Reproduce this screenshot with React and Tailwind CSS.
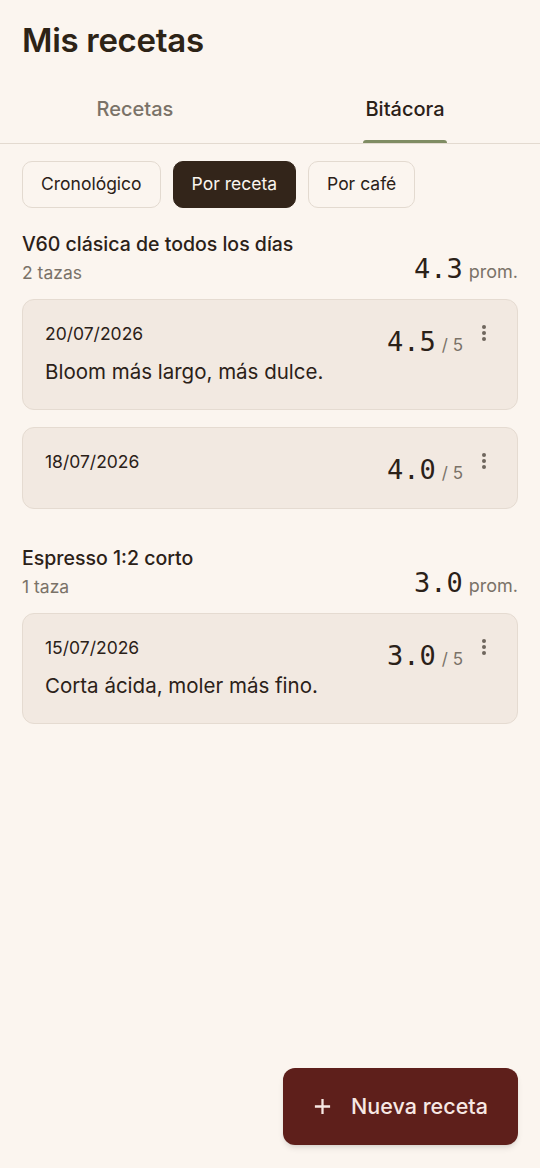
import { useState } from 'react';

const entriesByRecipe = [
  {
    name: 'V60 clásica de todos los días',
    count: '2 tazas',
    avg: '4.3',
    entries: [
      { date: '20/07/2026', score: '4.5', note: 'Bloom más largo, más dulce.' },
      { date: '18/07/2026', score: '4.0', note: null },
    ],
  },
  {
    name: 'Espresso 1:2 corto',
    count: '1 taza',
    avg: '3.0',
    entries: [{ date: '15/07/2026', score: '3.0', note: 'Corta ácida, moler más fino.' }],
  },
];

const KebabIcon = () => (
  <svg width="6" height="18" viewBox="0 0 6 18" className="text-[#6f665d]">
    <circle cx="3" cy="3" r="2" fill="currentColor" />
    <circle cx="3" cy="9" r="2" fill="currentColor" />
    <circle cx="3" cy="15" r="2" fill="currentColor" />
  </svg>
);

const EntryCard = ({ entry }) => (
  <div className="rounded-xl border border-[#e5dbd1] bg-[#f2e9e1] pl-[22px] pr-[30px] pt-[18px] pb-[22px]">
    <div className="flex items-start justify-between">
      <div className="mt-[4px] text-[17.5px] leading-6 text-[#2b2118]">{entry.date}</div>
      <div className="flex items-start gap-[18px]">
        <div className="mt-[9px] flex items-baseline gap-[6px]">
          <span className="font-['DejaVu_Sans_Mono',monospace] text-[27px] leading-[30px] text-[#2b2118]">
            {entry.score}
          </span>
          <span className="text-[17px] text-[#7a7268]">/ 5</span>
        </div>
        <div className="mt-[6px]">
          <KebabIcon />
        </div>
      </div>
    </div>
    {entry.note && (
      <p className="pb-[2px] text-[20.5px] leading-[26px] text-[#2b2118]">{entry.note}</p>
    )}
  </div>
);

export default function App() {
  const [tab, setTab] = useState('bitacora');
  const [mode, setMode] = useState('receta');

  const chips = [
    { id: 'crono', label: 'Cronológico' },
    { id: 'receta', label: 'Por receta' },
    { id: 'cafe', label: 'Por café' },
  ];

  return (
    <div className="relative min-h-[1168px] bg-[#fbf5ef] font-['Inter',sans-serif] text-[#2b2118]">
      <h1 className="px-[22px] pt-[20px] text-[33px] font-semibold leading-[40px] tracking-[-0.3px] text-[#2d2316]">
        Mis recetas
      </h1>

      <div className="mt-[37px] flex border-b border-[#e3dad0]">
        {[
          { id: 'recetas', label: 'Recetas' },
          { id: 'bitacora', label: 'Bitácora' },
        ].map((t) => (
          <button
            key={t.id}
            onClick={() => setTab(t.id)}
            className="flex flex-1 justify-center"
          >
            <span
              className={`flex flex-col items-center text-[20px] font-medium leading-6 ${
                tab === t.id ? 'text-[#2b2118]' : 'text-[#7a7268]'
              }`}
            >
              <span className="px-[2px] pb-[19px]">{t.label}</span>
              <span
                className={`h-[3px] w-full rounded-t-full ${
                  tab === t.id ? 'bg-[#7f8c63]' : 'bg-transparent'
                }`}
              />
            </span>
          </button>
        ))}
      </div>

      <div className="flex gap-3 px-[22px] pt-[17px]">
        {chips.map((c) => (
          <button
            key={c.id}
            onClick={() => setMode(c.id)}
            className={`h-[47px] rounded-[10px] border px-[18px] text-[17.5px] ${
              mode === c.id
                ? 'border-[#33251a] bg-[#33251a] text-[#fbf5ef]'
                : 'border-[#e3dad0] bg-[#fbf5ef] text-[#2b2118]'
            }`}
          >
            {c.label}
          </button>
        ))}
      </div>

      <div className="px-[22px] pt-[24px]">
        {entriesByRecipe.map((group, i) => (
          <div key={group.name} className={i > 0 ? 'mt-[37px]' : ''}>
            <div className="text-[19.5px] font-medium leading-6">{group.name}</div>
            <div className="-mt-[2px] flex items-end justify-between">
              <span className="text-[17.5px] leading-6 text-[#7a7268]">{group.count}</span>
              <div className="flex items-baseline gap-[6px]">
                <span className="font-['DejaVu_Sans_Mono',monospace] text-[27px] leading-[30px]">
                  {group.avg}
                </span>
                <span className="text-[18px] text-[#7a7268]">prom.</span>
              </div>
            </div>
            <div className="mt-[14px] flex flex-col gap-[17px]">
              {group.entries.map((e) => (
                <EntryCard key={e.date} entry={e} />
              ))}
            </div>
          </div>
        ))}
      </div>

      <button className="absolute bottom-[23px] right-[22px] flex h-[77px] w-[235px] items-center justify-center gap-[19px] rounded-xl bg-[#5e1f1b] text-[21.5px] font-medium text-[#f7e8e4] shadow-md">
        <svg width="19" height="19" viewBox="0 0 20 20" fill="none" stroke="currentColor" strokeWidth="2.4">
          <path d="M10 2v16M2 10h16" />
        </svg>
        Nueva receta
      </button>
    </div>
  );
}
